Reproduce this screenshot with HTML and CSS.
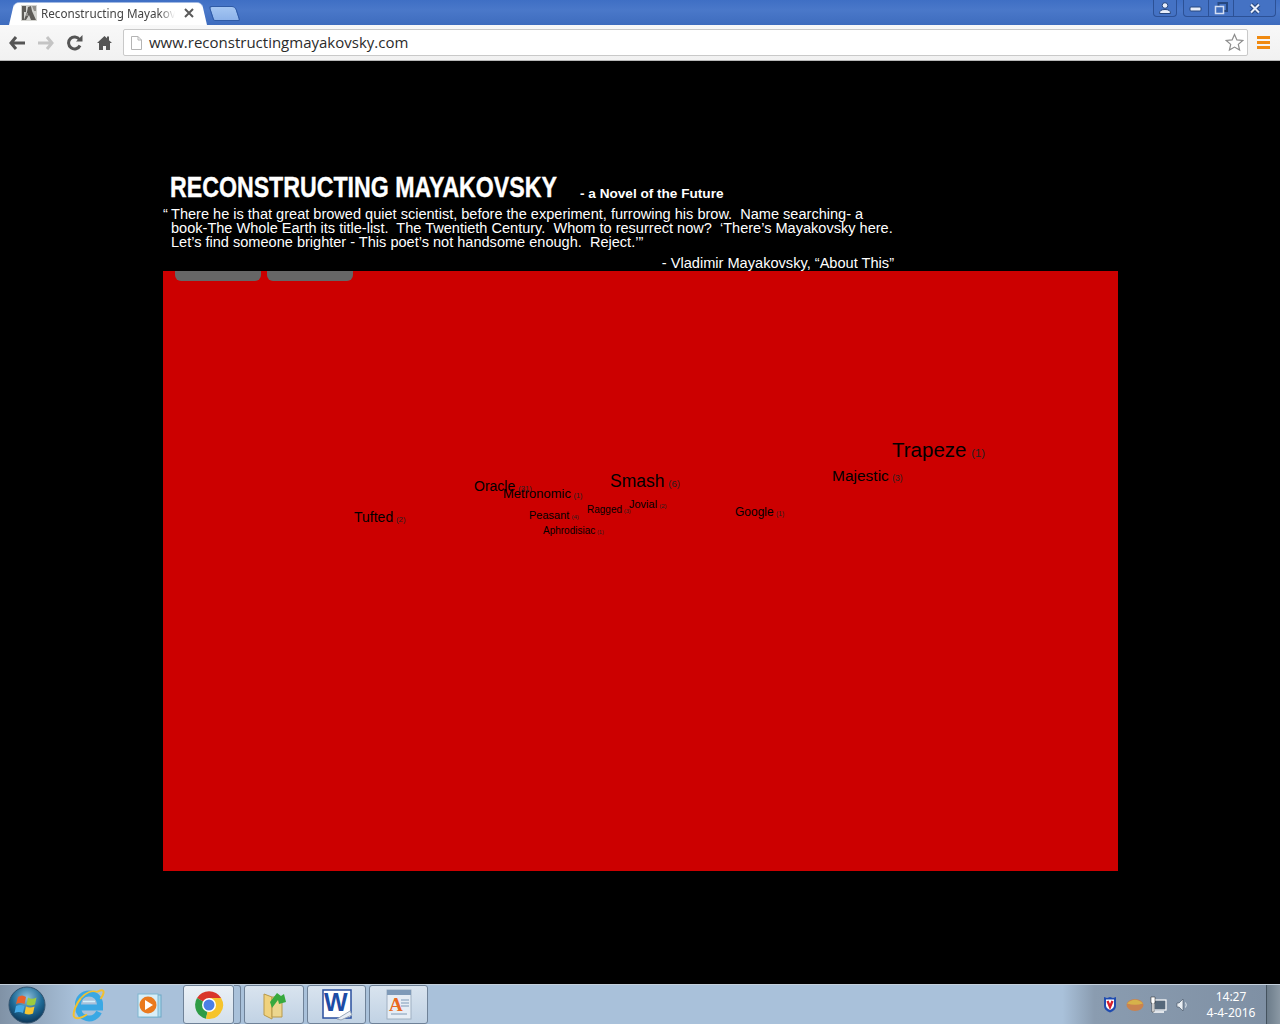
FILE: index.html
```html
<!DOCTYPE html>
<html lang="en">
<head>
  <meta charset="UTF-8" />
  <title>Reconstructing Mayakovsky</title>
  <link rel="stylesheet" href="styles.css">
</head>
<body>
  <div class="tabstrip">
    <div class="tab">
      <svg class="favicon" width="16" height="16" viewBox="0 0 16 16">
        <rect width="16" height="16" fill="#d4d4d0"/>
        <path d="M1 1h4v6H3v8H1zM7 2l3-1 1 5 4 9H10L8 10l-3 5H3l3-8z" fill="#5e5c58"/>
        <path d="M11 1h4v5h-2zM5 8h2v3H5z" fill="#92908c"/>
      </svg>
      <span class="tab-title">Reconstructing Mayakovsky</span>
      <svg class="tab-close" width="10" height="10" viewBox="0 0 10 10">
        <path d="M1 1l8 8M9 1L1 9" stroke="#5a5a5a" stroke-width="2"/>
      </svg>
    </div>
    <div class="new-tab"></div>
    <div class="window-btns">
      <div class="win-btn win-user">
        <svg width="14" height="12" viewBox="0 0 14 12"><circle cx="7" cy="3.500" r="2.800" fill="#e8eefa" stroke="#26477f"/><path d="M1.500 11.500c0-3 2-4 5.500-4s5.500 1 5.500 4z" fill="#e8eefa" stroke="#26477f"/></svg>
      </div>
      <div class="win-group">
        <div class="win-btn win-min">
          <svg width="14" height="10" viewBox="0 0 14 10"><rect x="1" y="4" width="11" height="4" rx="1" fill="#e8eefa" stroke="#26477f"/></svg>
        </div>
        <div class="win-btn win-max">
          <svg width="14" height="13" viewBox="0 0 14 13"><path d="M4.500 1h8.500v8H4.500z" fill="none" stroke="#26477f" stroke-width="2"/><path d="M1.500 4.500h8v7h-8z" fill="#3f6cbb" stroke="#d4def2" stroke-width="1.500"/></svg>
        </div>
        <div class="win-btn win-x">
          <svg width="14" height="11" viewBox="0 0 14 11"><path d="M3 1.500l8 8M11 1.500l-8 8" stroke="#26477f" stroke-width="4"/><path d="M3 1.500l8 8M11 1.500l-8 8" stroke="#e8eefa" stroke-width="2"/></svg>
        </div>
      </div>
    </div>
  </div>

  <div class="toolbar">
    <svg class="nav-icon" width="16" height="14" viewBox="0 0 16 14"><path d="M7 1L2 7l5 6M2 7h14" fill="none" stroke="#555" stroke-width="3"/></svg>
    <svg class="nav-icon" width="16" height="14" viewBox="0 0 16 14"><path d="M9 1l5 6-5 6M14 7H0" fill="none" stroke="#c4c4c4" stroke-width="3"/></svg>
    <svg class="nav-icon" width="16" height="16" viewBox="0 0 16 16"><path d="M13 10.500A6 6 0 1 1 12.500 4.500" fill="none" stroke="#555" stroke-width="3"/><path d="M9 6.500h6.500V0z" fill="#555"/></svg>
    <svg class="nav-icon" width="15" height="15" viewBox="0 0 15 15"><path d="M7.500 1L0 8h2v7h4v-4h3v4h4V8h2l-3-2.800V1.500h-2v1.800z" fill="#555"/></svg>
    <div class="omnibox">
      <svg class="page-icon" width="11" height="14" viewBox="0 0 11 14"><path d="M.5.500h6.500l3.500 3.500v9.500H.5z" fill="#fff" stroke="#b4b4b4"/><path d="M7 .500V4h3.500" fill="none" stroke="#b4b4b4"/></svg>
      <span class="url">www.reconstructingmayakovsky.com</span>
      <svg class="star" width="19" height="19" viewBox="0 0 19 19"><path d="M9.500 1.500l2.400 5.400 5.800.6-4.400 3.900 1.300 5.700-5.100-3-5.100 3 1.300-5.700-4.400-3.900 5.800-.6z" fill="#fff" stroke="#8c8c8c" stroke-width="1.200"/></svg>
    </div>
    <div class="menu-btn"><span></span><span></span><span></span></div>
  </div>

  <main class="page">
    <header class="intro">
      <div class="title-row">
        <h1>RECONSTRUCTING MAYAKOVSKY</h1>
        <span class="subtitle">- a Novel of the Future</span>
      </div>
      <blockquote class="quote">
        <span class="open-quote">“</span>
        There he is that great browed quiet scientist, before the experiment, furrowing his brow.&nbsp; Name searching- a<br>
        book-The Whole Earth its title-list.&nbsp; The Twentieth Century.&nbsp; Whom to resurrect now?&nbsp; ‘There’s Mayakovsky here.<br>
        Let’s find someone brighter - This poet’s not handsome enough.&nbsp; Reject.’”
      </blockquote>
      <p class="attribution">- Vladimir Mayakovsky, “About This”</p>
    </header>

    <section class="cloud">
      <div class="cloud-tabs">
        <div class="cloud-tab"></div>
        <div class="cloud-tab"></div>
      </div>
      <span class="word w-tufted">Tufted <small>(2)</small></span>
      <span class="word w-oracle">Oracle <small>(31)</small></span>
      <span class="word w-metronomic">Metronomic <small>(1)</small></span>
      <span class="word w-smash">Smash <small>(6)</small></span>
      <span class="word w-peasant">Peasant <small>(4)</small></span>
      <span class="word w-ragged">Ragged <small>(3)</small></span>
      <span class="word w-jovial">Jovial <small>(2)</small></span>
      <span class="word w-aphrodisiac">Aphrodisiac <small>(1)</small></span>
      <span class="word w-google">Google <small>(1)</small></span>
      <span class="word w-majestic">Majestic <small>(3)</small></span>
      <span class="word w-trapeze">Trapeze <small>(1)</small></span>
    </section>
  </main>

  <footer class="taskbar">
    <svg class="start-orb" width="38" height="38" viewBox="0 0 38 38">
      <defs>
        <radialGradient id="orb" cx="50%" cy="30%" r="75%"><stop offset="0" stop-color="#8fc0dc"/><stop offset=".55" stop-color="#1e6a96"/><stop offset="1" stop-color="#0a2c4c"/></radialGradient>
      </defs>
      <circle cx="19" cy="19" r="18" fill="url(#orb)" stroke="#33536e"/>
      <path d="M10 11q4-3 8 0l-1.500 7q-4-2-8.500 0z" fill="#e8602c"/>
      <path d="M20 11.500q4 2.500 8.500 0l-1.500 7q-4 2-8.500 0z" fill="#9ccb3f"/>
      <path d="M8 20q4-2 8.500 0L15 27q-4-2-8.500 0z" fill="#45a9e6"/>
      <path d="M18 20.500q4 2 8.500 0L25 27.500q-4 2-8.500 0z" fill="#f7c531"/>
    </svg>
    <div class="task-plain task-ie">
      <svg width="34" height="36" viewBox="0 0 34 36">
        <path d="M6 20.500h22v-3a11 11 0 0 0-22 0v3a11 11 0 0 0 21 4.500" fill="none" stroke="#3aa8e4" stroke-width="6"/>
        <path d="M11 14.500h12" stroke="#d4f0fb" stroke-width="1.500"/>
        <path d="M25 5c4-2.500 7-2.500 6.500 1-.3 2-1.500 4-3 6M9 11C4 17 .5 26 2 29.500c1.200 3 7 2 13-2" fill="none" stroke="#f2c030" stroke-width="2"/>
        <path d="M9 11C13 6 20 2.500 25 5" fill="none" stroke="#f2c030" stroke-width="1.500"/>
      </svg>
    </div>
    <div class="task-plain task-wmp">
      <svg width="30" height="28" viewBox="0 0 30 28">
        <rect x="6" y="4" width="20" height="22" fill="#a9d8ec" stroke="#6fa8c4"/>
        <rect x="3" y="3" width="20" height="23" fill="#d8eef7" stroke="#7eb6d0"/>
        <circle cx="13" cy="14" r="8.500" fill="#ea7a1e"/>
        <path d="M10 9l8 5-8 5z" fill="#fff"/>
      </svg>
    </div>
    <div class="task-btn task-chrome">
      <svg width="30" height="30" viewBox="0 0 30 30">
        <path d="M15 15L3 8.070A14 14 0 0 1 27.120 8H15z" fill="#d9352a"/>
        <path d="M15 15L3 8.070A14 14 0 0 0 12 28.700z" fill="#2f9c46"/>
        <path d="M15 15l-3 13.700A14 14 0 0 0 27.120 8H15z" fill="#f6c42c"/>
        <circle cx="15" cy="15" r="7" fill="#fff"/>
        <circle cx="15" cy="15" r="5.500" fill="#4b7fe6"/>
      </svg>
    </div>
    <div class="task-sep"></div>
    <div class="task-btn task-folder">
      <svg width="30" height="34" viewBox="0 0 30 34">
        <path d="M5 6l8 3v22l-8-4z" fill="#f0d27e" stroke="#b8994a"/>
        <path d="M13 9h10v20H13z" fill="#ecd68e" stroke="#b8994a"/>
        <path d="M13 20l6-8 1 4 7-2-2-8-3 2-4-3-7 9z" fill="#36a93e"/>
      </svg>
    </div>
    <div class="task-btn task-word">
      <svg width="32" height="32" viewBox="0 0 32 32">
        <rect x="2" y="1" width="28" height="28" fill="#fff" stroke="#2a4f9e" stroke-width="1.500"/>
        <text x="3" y="22" class="word-letter">W</text>
        <path d="M16 30l13-8 2 4-11 5z" fill="#e8eef5" stroke="#9aa9ba"/>
      </svg>
    </div>
    <div class="task-btn task-access">
      <svg width="26" height="32" viewBox="0 0 26 32">
        <rect x="1" y="1" width="24" height="29" fill="#e6edf5" stroke="#9fb0c2"/>
        <rect x="1" y="1" width="24" height="5" fill="#7f9ab8"/>
        <text x="3" y="22" class="access-letter">A</text>
        <path d="M15 11h8M15 14h8M15 17h8M5 25h16" stroke="#7f9ab8"/>
      </svg>
    </div>

    <div class="tray">
      <svg width="14" height="17" viewBox="0 0 14 17"><path d="M1 1l3 1 3-1 3 1 3-1v9q0 4-6 6.500Q1 14 1 10z" fill="#1f4bb0"/><path d="M3 3.500h8v6q0 2.500-4 4.500-4-2-4-4.500z" fill="#fff"/><path d="M4.500 5l2.500 6 2.500-6" fill="none" stroke="#d8202c" stroke-width="2.400"/></svg>
      <svg class="tray-disk" width="18" height="14" viewBox="0 0 18 14"><ellipse cx="9" cy="7" rx="8.500" ry="6" fill="#c98350"/><path d="M1 5.500Q9-2 17 5.500 9 8 1 5.500z" fill="#d6b24a"/></svg>
      <svg class="tray-net" width="18" height="18" viewBox="0 0 18 18"><rect x="5" y="4" width="12" height="10" fill="#56687a" stroke="#fff" stroke-width="1.200"/><path d="M4 16h11" stroke="#fff" stroke-width="1.500"/><path d="M2 1h4v6H5v9H3V7H2z" fill="#fff" stroke="#222" stroke-width=".5"/></svg>
      <svg class="tray-vol" width="13" height="14" viewBox="0 0 13 14"><path d="M1 5h2l4-4v12L3 9H1z" fill="#e8edf2" stroke="#3f4f60" stroke-width=".6"/><path d="M9.500 4.500q1.500 2.500 0 5" fill="none" stroke="#e4eaf0"/></svg>
    </div>
    <div class="clock">
      <span>14:27</span>
      <span>4-4-2016</span>
    </div>
    <div class="show-desktop"></div>
  </footer>
</body>
</html>
```

FILE: styles.css
```css
* {
  margin: 0;
  padding: 0;
  box-sizing: border-box;
}

html, body {
  height: 100%;
  overflow: hidden;
}

body {
  display: flex;
  flex-direction: column;
  background: #000;
  font-family: 'Liberation Sans', Arial, sans-serif;
}

/* browser chrome */
.tabstrip {
  height: 25px;
  display: flex;
  align-items: flex-end;
  padding-left: 9px;
  background: linear-gradient(#3f6fc4, #4a78c9 40%, #3e6cbe);
}

.tab {
  position: relative;
  z-index: 0;
  width: 198px;
  height: 24px;
  margin-right: 1px;
  display: flex;
  align-items: center;
  padding: 0 13px 0 12px;
}

/* slanted tab shape sits behind the label */
.tab::before {
  content: "";
  position: absolute;
  inset: 0;
  z-index: -1;
  background: #fff;
  border-radius: 5px 5px 0 0;
  transform: perspective(60px) rotateX(8deg);
  transform-origin: bottom;
}

.favicon {
  flex: none;
  margin-right: 4px;
}

.tab-title {
  flex: 1;
  overflow: hidden;
  white-space: nowrap;
  font-family: 'Noto Sans', sans-serif;
  font-size: 11.7px;
  color: #444;
  -webkit-mask-image: linear-gradient(to right, #000 88%, transparent);
  mask-image: linear-gradient(to right, #000 88%, transparent);
}

.tab-close {
  flex: none;
  margin-left: 9px;
}

.new-tab {
  width: 27px;
  height: 15px;
  margin: 0 0 4px 3px;
  background: linear-gradient(#a5c6f2, #8db3ea);
  border: 1px solid #2f5aa5;
  border-radius: 3px 4px 2px 2px;
  transform: skewX(18deg);
}

.window-btns {
  margin-left: auto;
  align-self: flex-start;
  display: flex;
  gap: 6px;
  padding-right: 4px;
}

.win-group {
  display: flex;
}

.win-btn {
  height: 17px;
  display: flex;
  align-items: center;
  justify-content: center;
  border: 1px solid #2c5196;
  border-top: none;
  background: #4472c4;
}

.win-user {
  width: 24px;
  border-radius: 0 0 4px 4px;
}

.win-min {
  width: 26px;
  border-radius: 0 0 0 4px;
}

.win-max {
  width: 25px;
  border-left: none;
}

.win-x {
  width: 42px;
  border-left: none;
  border-radius: 0 0 4px 0;
}

.toolbar {
  height: 36px;
  display: flex;
  align-items: center;
  padding: 0 9px;
  background: linear-gradient(#f8f8f8, #f1f1f1);
  border-bottom: 1px solid #b8b8b8;
}

.nav-icon {
  flex: none;
  margin-right: 13px;
}

.nav-icon:nth-child(4) {
  margin-left: 1px;
  margin-right: 11px;
}

.omnibox {
  width: 1125px;
  height: 27px;
  display: flex;
  align-items: center;
  padding: 0 3px 0 7px;
  background: #fff;
  border: 1px solid #c9c9c9;
  border-radius: 2px;
}

.page-icon {
  flex: none;
  margin-right: 7px;
}

.url {
  flex: 1;
  padding-bottom: 2px;
  font-family: 'Open Sans', sans-serif;
  font-size: 15px;
  color: #2b2b2b;
}

.menu-btn {
  margin-left: 9px;
  width: 13px;
  display: flex;
  flex-direction: column;
  gap: 2px;
}

.menu-btn span {
  height: 3px;
  background: #f08a10;
}

/* page */
.page {
  flex: 1;
  padding: 110px 162px 0 163px;
}

.intro {
  color: #fff;
  width: 735px;
  height: 100px;
}

.title-row {
  display: flex;
  align-items: baseline;
  height: 32px;
  padding-left: 7px;
}

h1 {
  font-size: 30px;
  line-height: 32px;
  font-weight: 700;
  white-space: nowrap;
  width: 387px;
  transform: scaleX(0.772);
  transform-origin: left;
  -webkit-text-stroke: 0.4px #fff;
}

.subtitle {
  position: relative;
  top: 1px;
  margin-left: 23px;
  font-size: 13.6px;
  font-weight: 700;
}

.quote {
  position: relative;
  margin-top: 4px;
  padding-left: 8px;
  font-size: 14.55px;
  line-height: 14px;
  white-space: nowrap;
}

.open-quote {
  position: absolute;
  left: 0;
  top: 0;
}

.attribution {
  margin-top: 6px;
  margin-right: 4px;
  font-size: 14.6px;
  line-height: 16px;
  text-align: right;
}

.cloud {
  position: relative;
  width: 955px;
  height: 600px;
  background: #cc0000;
  overflow: hidden;
}

.cloud-tabs {
  display: flex;
  gap: 6px;
  padding-left: 12px;
}

.cloud-tab {
  width: 86px;
  height: 10px;
  background: #666;
  border-radius: 0 0 6px 6px;
}

.word {
  position: absolute;
  color: #000;
  white-space: nowrap;
  line-height: 1;
}

.word small {
  margin-left: -1px;
  font-size: 0.55em;
  color: #222;
}

.w-tufted { left: 191px; top: 239px; font-size: 14px; }
.w-oracle { left: 311px; top: 208px; font-size: 14px; }
.w-metronomic { left: 340px; top: 216px; font-size: 13px; }
.w-smash { left: 447px; top: 202px; font-size: 17.5px; }
.w-peasant { left: 366px; top: 239px; font-size: 11px; }
.w-ragged { left: 424px; top: 234px; font-size: 10px; }
.w-jovial { left: 466px; top: 228px; font-size: 11px; }
.w-aphrodisiac { left: 380px; top: 255px; font-size: 10px; }
.w-google { left: 572px; top: 235px; font-size: 12px; }
.w-majestic { left: 669px; top: 197px; font-size: 15.5px; }
.w-trapeze { left: 729px; top: 169px; font-size: 20.5px; }

/* windows taskbar */
.taskbar {
  height: 40px;
  display: flex;
  align-items: center;
  background: linear-gradient(to right, #8092a6, #a9c1da 6%, #a9c1da 83%, #8a9cb0 85.5%, #7e8fa3);
  border-top: 1px solid #c4d0dc;
}

.start-orb {
  flex: none;
  margin-left: 8px;
}

.task-plain {
  flex: none;
  display: flex;
  align-items: center;
  justify-content: center;
}

.task-ie {
  width: 62px;
  margin-left: 12px;
}

.task-wmp {
  width: 30px;
  margin: 0 19px 0 15px;
}

.task-btn {
  flex: none;
  height: 39px;
  display: flex;
  align-items: center;
  justify-content: center;
  background: linear-gradient(#d9e4ef, #c1d2e4);
  border: 1px solid #6f8298;
  border-radius: 3px;
  margin-right: 3px;
}

.task-chrome {
  width: 51px;
  margin-left: -1px;
  margin-right: 0;
  background: linear-gradient(#eaf0f6, #d4e0ec);
}

.task-sep {
  width: 7px;
  height: 39px;
  margin-right: 3px;
  border: 1px solid #6f8298;
  border-left: none;
  border-radius: 0 3px 3px 0;
}

.task-folder {
  width: 60px;
}

.task-word {
  width: 59px;
}

.task-access {
  width: 59px;
}

.word-letter {
  font-family: 'Liberation Sans', sans-serif;
  font-size: 25px;
  font-weight: 700;
  fill: #1d4ca5;
}

.access-letter {
  font-family: 'Liberation Serif', serif;
  font-size: 19px;
  font-weight: 700;
  fill: #ea6a20;
}

.tray {
  margin-left: auto;
  display: flex;
  align-items: center;
  gap: 9px;
}

.tray-net {
  margin-left: -4px;
}

.clock {
  width: 70px;
  margin-left: 7px;
  display: flex;
  flex-direction: column;
  align-items: center;
  gap: 1px;
  font-family: 'Noto Sans', sans-serif;
  font-size: 12px;
  line-height: 15px;
  color: #fff;
}

.show-desktop {
  width: 14px;
  height: 39px;
  background: linear-gradient(to right, #6c7c8a, #8a98a4);
  border-left: 1px solid #44525e;
}
```
